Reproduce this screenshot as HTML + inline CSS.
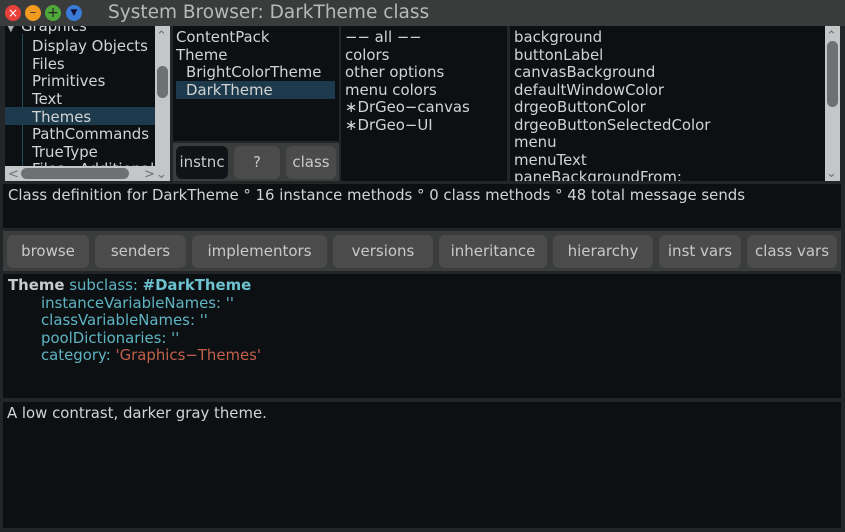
<!DOCTYPE html>
<html><head><meta charset="utf-8"><style>
*{margin:0;padding:0;box-sizing:border-box}
body{width:845px;height:532px;background:#232628;position:relative;overflow:hidden;font-family:"DejaVu Sans","Liberation Sans",sans-serif;font-size:14.9px;color:#d2d4d4}
.a{position:absolute}
.p{position:absolute;background:#0c1013;overflow:hidden}
.l{position:absolute;white-space:nowrap;line-height:17.6px;margin-top:2px}
.sel{background:#1d3a4c}
.bt{position:absolute;background:#4a4b4a;border-radius:6px;color:#c8caca;text-align:center;line-height:33px;font-size:15px}
.track{position:absolute;background:#c3c7c8}
.thumb{position:absolute;background:#6e7072;border-radius:7px}
.ch{position:absolute;color:#6e7072;font-size:13px;line-height:13px}
</style></head><body>
<div class="a" style="left:0;top:0;width:845px;height:26px;background:#3a3b3b"></div>
<div class="a" style="left:5px;top:5px;width:16px;height:16px;border-radius:8px;background:#e8403a;color:#fff;font-size:12px;line-height:16px;text-align:center">×</div>
<div class="a" style="left:25px;top:5px;width:16px;height:16px;border-radius:8px;background:#f09a20;color:#333;font-size:13px;line-height:15px;text-align:center">–</div>
<div class="a" style="left:45px;top:5px;width:16px;height:16px;border-radius:8px;background:#4fa83a;color:#222;font-size:14px;line-height:16px;text-align:center">+</div>
<div class="a" style="left:66px;top:5px;width:16px;height:16px;border-radius:8px;background:#3a7ad8;color:#113;font-size:9px;line-height:16px;text-align:center">▼</div>
<div class="a" style="left:108px;top:2px;font-size:18.5px;color:#b8baba;white-space:nowrap">System Browser: DarkTheme class</div>

<!-- pane1 -->
<div class="p" style="left:5px;top:26px;width:150px;height:140px">
<div class="a" style="left:17px;top:8px;width:1px;height:140px;background:#1f4e60"></div>
<div class="a sel" style="left:0;top:81px;width:150px;height:18px"></div>
<div class="l" style="left:2px;top:-8px;font-size:10px;color:#aaa">▼</div>
<div class="l" style="left:16px;top:-10px">Graphics</div>
<div class="l" style="left:27px;top:10px">Display Objects</div>
<div class="l" style="left:27px;top:28px">Files</div>
<div class="l" style="left:27px;top:45px">Primitives</div>
<div class="l" style="left:27px;top:63px">Text</div>
<div class="l" style="left:27px;top:81px">Themes</div>
<div class="l" style="left:27px;top:98px">PathCommands</div>
<div class="l" style="left:27px;top:116px">TrueType</div>
<div class="l" style="left:27px;top:133px">Files - Additional</div>
</div>
<div class="track" style="left:155px;top:26px;width:15px;height:155px"></div>
<div class="thumb" style="left:157px;top:66px;width:11px;height:32px"></div>
<div class="ch" style="left:156px;top:30px">⌃</div>
<div class="ch" style="left:156px;top:168px">⌄</div>
<div class="track" style="left:5px;top:166px;width:150px;height:15px"></div>
<div class="thumb" style="left:21px;top:168px;width:108px;height:11px"></div>
<div class="ch" style="left:8px;top:168px">&lt;</div>
<div class="ch" style="left:144px;top:168px">&gt;</div>

<!-- pane2 -->
<div class="p" style="left:173px;top:26px;width:166px;height:115px">
<div class="a sel" style="left:3px;top:55px;width:159px;height:18px"></div>
<div class="l" style="left:3px;top:1px">ContentPack</div>
<div class="l" style="left:3px;top:19px">Theme</div>
<div class="l" style="left:13px;top:36px">BrightColorTheme</div>
<div class="l" style="left:13px;top:54px">DarkTheme</div>
</div>
<div class="a" style="left:173px;top:143px;width:166px;height:38px;background:#3b3d3d"></div>
<div class="bt" style="left:176px;top:146px;width:52px;background:#101416">instnc</div>
<div class="bt" style="left:234px;top:146px;width:46px">?</div>
<div class="bt" style="left:286px;top:146px;width:50px">class</div>

<!-- pane3 -->
<div class="p" style="left:341px;top:26px;width:166px;height:155px">
<div class="l" style="left:4px;top:1px">−− all −−</div>
<div class="l" style="left:4px;top:19px">colors</div>
<div class="l" style="left:4px;top:36px">other options</div>
<div class="l" style="left:4px;top:54px">menu colors</div>
<div class="l" style="left:4px;top:71px">∗DrGeo−canvas</div>
<div class="l" style="left:4px;top:89px">∗DrGeo−UI</div>
</div>
<!-- pane4 -->
<div class="p" style="left:510px;top:26px;width:315px;height:155px">
<div class="l" style="left:4px;top:1px">background</div>
<div class="l" style="left:4px;top:19px">buttonLabel</div>
<div class="l" style="left:4px;top:36px">canvasBackground</div>
<div class="l" style="left:4px;top:54px">defaultWindowColor</div>
<div class="l" style="left:4px;top:71px">drgeoButtonColor</div>
<div class="l" style="left:4px;top:89px">drgeoButtonSelectedColor</div>
<div class="l" style="left:4px;top:106px">menu</div>
<div class="l" style="left:4px;top:124px">menuText</div>
<div class="l" style="left:4px;top:141px">paneBackgroundFrom:</div>
</div>
<div class="track" style="left:825px;top:26px;width:15px;height:155px"></div>
<div class="thumb" style="left:827px;top:41px;width:11px;height:66px"></div>
<div class="ch" style="left:826px;top:30px">⌃</div>
<div class="ch" style="left:826px;top:167px">⌄</div>

<!-- info -->
<div class="p" style="left:3px;top:184px;width:838px;height:44px">
<div class="l" style="left:5px;top:1px">Class definition for DarkTheme ° 16 instance methods ° 0 class methods ° 48 total message sends</div>
</div>

<!-- button row -->
<div class="a" style="left:3px;top:231px;width:838px;height:40px;background:#3b3d3d"></div>
<div class="bt" style="left:7px;top:235px;width:82px">browse</div>
<div class="bt" style="left:95px;top:235px;width:91px">senders</div>
<div class="bt" style="left:192px;top:235px;width:135px">implementors</div>
<div class="bt" style="left:333px;top:235px;width:100px">versions</div>
<div class="bt" style="left:439px;top:235px;width:108px">inheritance</div>
<div class="bt" style="left:553px;top:235px;width:100px">hierarchy</div>
<div class="bt" style="left:659px;top:235px;width:82px">inst vars</div>
<div class="bt" style="left:747px;top:235px;width:90px">class vars</div>

<!-- code -->
<div class="p" style="left:3px;top:274px;width:838px;height:124px">
<div class="l" style="left:5px;top:1px"><b style="color:#c8cacb">Theme</b> <span style="color:#5fb4c2">subclass:</span> <b style="color:#6cc3cf">#DarkTheme</b></div>
<div class="l" style="left:38px;top:19px;color:#5fb4c2">instanceVariableNames: ''</div>
<div class="l" style="left:38px;top:36px;color:#5fb4c2">classVariableNames: ''</div>
<div class="l" style="left:38px;top:54px;color:#5fb4c2">poolDictionaries: ''</div>
<div class="l" style="left:38px;top:71px;color:#5fb4c2">category: <span style="color:#c0604a">'Graphics−Themes'</span></div>
</div>

<!-- comment -->
<div class="p" style="left:3px;top:402px;width:838px;height:126px">
<div class="l" style="left:4px;top:1px">A low contrast, darker gray theme.</div>
</div>
</body></html>
